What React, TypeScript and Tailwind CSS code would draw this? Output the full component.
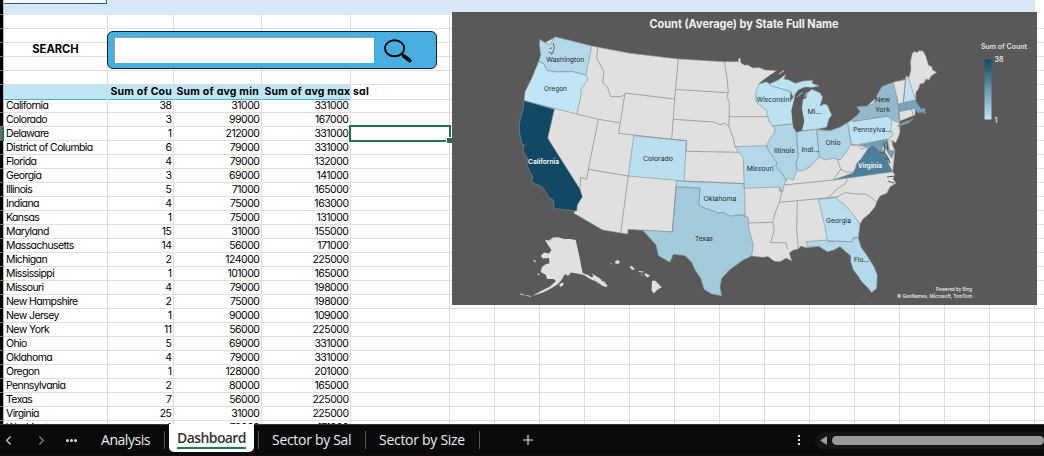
import React from "react";
import { ChevronLeft, ChevronRight, Plus } from "lucide-react";

type Row = [string, string, string, string];

const rows: Row[] = [
  ["California", "38", "31000", "331000"],
  ["Colorado", "3", "99000", "167000"],
  ["Delaware", "1", "212000", "331000"],
  ["District of Columbia", "6", "79000", "331000"],
  ["Florida", "4", "79000", "132000"],
  ["Georgia", "3", "69000", "141000"],
  ["Illinois", "5", "71000", "165000"],
  ["Indiana", "4", "75000", "163000"],
  ["Kansas", "1", "75000", "131000"],
  ["Maryland", "15", "31000", "155000"],
  ["Massachusetts", "14", "56000", "171000"],
  ["Michigan", "2", "124000", "225000"],
  ["Mississippi", "1", "101000", "165000"],
  ["Missouri", "4", "79000", "198000"],
  ["New Hampshire", "2", "75000", "198000"],
  ["New Jersey", "1", "90000", "109000"],
  ["New York", "11", "56000", "225000"],
  ["Ohio", "5", "69000", "331000"],
  ["Oklahoma", "4", "79000", "331000"],
  ["Oregon", "1", "128000", "201000"],
  ["Pennsylvania", "2", "80000", "165000"],
  ["Texas", "7", "56000", "225000"],
  ["Virginia", "25", "31000", "225000"],
  ["Washington", "4", "79000", "171000"],
];

const tail = Array.from({ length: 14 }, (_, i) => i);
const line = "shrink-0 border-r border-b border-[#dedede]";

function Gutter({ selected = false }: { selected?: boolean }) {
  return selected ? (
    <div className="h-full w-1 shrink-0 border-r-2 border-b border-b-[#555] border-r-[#217346] bg-[#6b6b6b]" />
  ) : (
    <div className="h-full w-1 shrink-0 border-r border-b border-r-[#b9b9b9] border-b-[#777] bg-black" />
  );
}

function TailCells() {
  return (
    <>
      <div className={`${line} h-full w-[99px]`} />
      {tail.map((i) => (
        <div key={i} className={`${line} h-full w-[45px]`} />
      ))}
    </>
  );
}

function SheetRow({ cells, selected }: { cells?: Row; selected?: boolean }) {
  const c = cells ?? ["", "", "", ""];
  const num = "h-full pr-[1.5px] text-right";
  return (
    <div className="flex h-[14px] shrink-0 text-[10.5px] leading-[13px] tracking-[-0.5px] text-black">
      <Gutter selected={selected} />
      <div className={`${line} h-full w-[104px] pl-[2px] tracking-[-0.6px] whitespace-nowrap`}>{c[0]}</div>
      <div className={`${line} ${num} w-[66px]`}>{c[1]}</div>
      <div className={`${line} ${num} w-[88px]`}>{c[2]}</div>
      <div className={`${line} ${num} w-[89px]`}>{c[3]}</div>
      <TailCells />
    </div>
  );
}

function HeaderRow() {
  const cell = "h-full shrink-0 border-b border-[#47aee0] bg-[#bfe6f5] pl-[2.5px] whitespace-nowrap";
  return (
    <div className="flex h-[15px] shrink-0 text-[10.5px] leading-[14px] font-bold tracking-[0.22px] text-black">
      <Gutter />
      <div className={`${cell} w-[104px]`} />
      <div className={`${cell} w-[66px] overflow-hidden`}>Sum of Cou</div>
      <div className={`${cell} w-[88px]`}>Sum of avg min</div>
      <div className={`${cell} w-[89px]`}>
        <span className="relative">Sum of avg max sal</span>
      </div>
      <TailCells />
    </div>
  );
}

function SearchBox() {
  return (
    <div className="absolute top-[31px] left-[107px] flex h-[38px] w-[330px] items-center rounded-[6px] border border-[#0b2233] bg-[#47aee0] pl-[6px]">
      <div className="h-[26px] w-[260px] border-t border-l border-[#a09a98] bg-white" />
      <svg className="ml-[8px]" width="32" height="28" viewBox="382 36 32 28">
        <ellipse cx="394.6" cy="48.3" rx="9.6" ry="8" fill="none" stroke="#000" strokeWidth="1.9" />
        <path d="M401.5 54.2l3 2" stroke="#000" strokeWidth="2" />
        <path d="M404 56.3l5.8 4.2" stroke="#000" strokeWidth="3.8" strokeLinecap="round" />
      </svg>
    </div>
  );
}

const land = "#e0e0e0";
const wa = "M540 39.3L545 42.7L550.7 44.7L552.3 40.7L555 36.7L591.7 46L586 75L572.7 71.7L555 72L546.7 70.3L544 64L538.7 61.3L540.7 55L539.3 45Z";
const mainland =
  "M544 64L540 45L555 37.5L591.7 46L630 53.3L678.3 59L724.3 61.7L738.3 61.7L738.7 58L740.3 58.5L740.7 62.7L745 65.5L747.3 64.7L753 68L759.3 67.5L765 70L776.7 70.7L768.3 78.3L758.7 84L792.7 124L797 131.5L816.7 129.3L830 130.7L840 127.3L851.7 120L893.3 82.3L905.7 79.3L909 77.3L911 70L910.5 62L912.3 53.3L914 51.5L917 52.5L919 50.7L923 51L926 56.7L928.3 65L932 67L932.5 70L936.7 72.3L931 76L929 80L926 79L924 83L920 84L918.5 89L916 92L915.7 100L915 115L900 121L899.3 123.3L900 132L898.3 137L895.5 143L892 140L893 147L895 150L892.7 171.7L895 175L893 179L896 183L890 187L886.7 193.3L880 196L876.7 201.7L875 207L869 214L863 219L860 224L858.3 238L852 243L806 247.7L801 246L798 249L793.3 250L789.3 253L791.7 261L786 258L780 261.7L774 261L768 256.5L763.3 257.3L751.7 256L745 215L672.3 232L628 229.3L627.7 234L602.7 230L574 213.3L576.7 205L548 138L530 99Z";
const blueStates: [string, string, string][] = [
  ["washington", "#b3d8ea", wa],
  ["oregon", "#c0e6f6", "M538.7 61.3L544 64L546.7 70.3L555 72L572.7 71.7L586 75L588 79.3L580.7 90L581.5 94L576.7 114L524 100.7L525 91.7L531.7 78.3Z"],
  ["california", "#114863", "M524 100.7L554.3 109.3L547.7 138.3L580 189.3L582.3 196.7L577.3 205L576.7 211L554.3 208.7L553.3 200L548 197L546.7 193L541.7 186.7L531.7 182.3L532.7 176.7L529 170L526.7 163.3L528 159L523 151L524 145L521.7 143.3L519.5 132L519.5 122L523 110Z"],
  ["colorado", "#b9dfef", "M633.7 135.7L686.3 140.7L684.3 181L628.3 176Z"],
  ["texas", "#a4cbdc", "M676 186.7L700 188L699 205.5L705 208L711 210L718 213L724 212.5L730 216L740 214.7L748.3 217.3L748.7 228.3L753.3 245L751.7 256L743.3 260L730 269.5L721.7 278.3L720 286.7L721.7 295.7L711.7 294L704 289.3L700.7 278.3L695 270L691.7 262.3L685 255.7L673.3 254.3L670 262.3L658.3 255.7L656 245L642.5 230L672.3 232Z"],
  ["oklahoma", "#b3d8ea", "M676.3 181L744 183.6L745 199L745 215.5L740 214.7L730 216L724 212.5L718 213L711 210L705 208L699 205.5L700 188L676 186.7Z"],
  ["missouri", "#b3d8ea", "M735 146.7L766.7 145.7L768.3 150L771 154L776.7 162.7L776 166.7L783.3 175L786 181L784 185L782.7 190.7L779.5 191.5L779.3 187L744.3 188.3L743.3 157.7L739.3 153.3Z"],
  ["wisconsin", "#bce2f2", "M758.7 84L766.7 81.7L771.7 85L783.3 89.3L790.7 91.7L790 101.7L796 93.3L791.7 110L792.7 124L772.5 126L769.3 122L766 110L755.7 101.7L756 91.7Z"],
  ["michigan-upper", "#bce2f2", "M769 84L778.3 80L786 74L784 79L789 80L795 83.3L803.3 81L813 80.3L812 83L819.3 86L812 87.5L805 87L798.3 90L793 97L790.7 91.7L783.3 89.3L771.7 86Z"],
  ["michigan-lower", "#bce2f2", "M811.7 89.3L820 92.7L822.7 97.3L820 106L824 104L827.3 105L831.7 115L829 119L826.7 127.3L816.7 129.3L801.7 131L804 121.7L801.7 108.3L803 99L806 98L807 93.3Z"],
  ["illinois", "#afd4e6", "M772.5 126L792.7 124L796 131.7L798.3 156.7L796 164L797.3 170L793.3 180L788 178L786 181L783.3 175L776 166.7L776.7 162.7L768.3 150L766.7 145.7L770 138.3L774 133.3L775 128Z"],
  ["indiana", "#b3d8ea", "M796.5 131.7L816.7 129.3L819.3 157.3L814 162L810 166.7L804 170L797.3 171L796 164L798.3 156.7Z"],
  ["ohio", "#afd4e6", "M816.7 129.3L823 131L830 130.7L840 127.3L847.7 122.7L851 143.3L846.7 151.7L840 160L833.3 158.3L826 160L819.3 157.3Z"],
  ["pennsylvania", "#bce2f2", "M847.7 122.7L851.7 120L852.5 121.5L888.3 116L891.7 121.7L890.7 130L893.3 135L888.3 139L851.7 145.7Z"],
  ["new-york", "#92b9cc", "M852.5 121.5L860 111.7L856.7 106.7L866 106L873.3 104L876 97L881.7 86.7L893.3 82.3L896.7 96.7L899 111.7L899.3 122.7L892.7 120L888.3 116Z"],
  ["long-island", "#7ca9c0", "M897 126.5L902 123L913.3 118.8L908 123.3Z"],
  ["new-hampshire", "#bce2f2", "M905.7 76.7L907.7 76L913 92L915.7 100L903.3 102.7Z"],
  ["massachusetts", "#76a4bc", "M898.3 104L915 100.3L918.3 105L921 109L925 108L925 111.7L918.3 113L914.3 108.5L899 111.7Z"],
  ["virginia", "#4e7f98", "M833.3 180L846 175.5L853 173L855.5 168L857 163L861 159L865 153L868.5 147.5L873 145L879 150L886.7 157L889 165L892.7 171.7Z"],
  ["maryland", "#719fb5", "M859.3 145L887.3 139.3L889.3 150.7L895 150.5L891.7 158.3L888 153L884 145L882 149L886 157L879 151L873 145L866 147Z"],
  ["georgia", "#b9dfef", "M818.3 199.3L836.7 197.3L838 200L845 205L853 214L860 224L858.3 237.3L853.3 238L852.7 241.7L827.3 240.7L826 234L825 226.7Z"],
  ["florida", "#b3d8ea", "M806 241.7L826.7 240L828 241.5L852.7 241.7L853.3 238L858.3 238L861 247L866.7 255L874 266.7L877.3 275L876.7 288.3L871.7 292.7L867.3 287.3L861.7 281.7L858 276L853.3 270L850.7 262L850.7 256L840 246.7L834 250L827.3 251.7L818.3 246L807.3 247Z"],
];
const borders =
  "M576.7 114L598.3 119.3L619.3 122.7M598.3 119.3L588.3 169.3L586.7 179.3L580.7 177.3L580 189.3M588.3 169.3L628.3 176L620.7 232.7M597.7 47.3L596.7 58.3L604 71.7L602.7 82.7L607.3 86.7L610.7 96.7L620.7 96.7L624.7 95M625 93L674.7 99L671.7 139.3L618.7 133.3ZM678.3 59L674.7 99M676.3 89.5L728.3 92.7M673.3 119.3L713.3 122L720 124.7L725 123.3L729.3 127.3L733.3 138.3L735 146.7M671.7 139.3L686.7 140.7L686 151.3L738.3 152.3M684.3 181L744 183.6M724.3 61.7L727.3 80L728.3 92.7L726.7 96.7L729.3 101.7L729 127M729 116.7L767.3 116.7M676 187L672.3 232M779.3 187L782 191L779.3 202.3L775 213.3L772.7 221.7L774.3 230L770.7 242.7L786 242.7L787.3 249M748.7 223L772.7 222.3M779.3 202.3L836.7 197L845 192.7L856.7 194L866 194L876.7 201.7M784 185L833.3 180M797.3 200.7L796.7 230L798.3 249M847.7 179.3L845 184L837 189L828.3 198M837.3 159.5L840.7 169.3L833.3 180M840.7 169.3L846.7 172L853 172M851 144L858 145.5L862 149L868 147M897.7 104L896.7 96M903.3 102.7L905.7 79.3L898 81M899 111.7L900 121M911.5 109L913 115";

const labels: [string, number, number, number, boolean?][] = [
  ["Washington", 565.3, 62, 38],
  ["Oregon", 555.5, 91, 23],
  ["California", 543.6, 164, 31, true],
  ["Colorado", 658, 161, 30],
  ["Texas", 704, 241, 18],
  ["Oklahoma", 720, 200.5, 33],
  ["Missouri", 760.2, 171, 27],
  ["Wisconsin", 773, 102.3, 33],
  ["Illinois", 784.6, 153, 21],
  ["Indi...", 810.5, 152, 18],
  ["Mi...", 814.5, 114, 14],
  ["Ohio", 833, 145, 15],
  ["New", 882.5, 102, 15],
  ["York", 882.5, 112.3, 15],
  ["Pennsylva...", 872.3, 132, 38],
  ["Virginia", 870, 168, 24, true],
  ["Georgia", 838.5, 223, 25],
  ["Flo...", 861.5, 262, 15],
];

function MapChart() {
  return (
    <div className="absolute top-[12px] left-[452px] h-[293px] w-[585px] bg-[#595959] [font-feature-settings:normal]">
      <svg width="585" height="293" viewBox="452 12 585 293" fontFamily="Inter,'Noto Sans',sans-serif">
        <defs>
          <linearGradient id="scale" x1="0" y1="0" x2="0" y2="1">
            <stop offset="0" stopColor="#114863" />
            <stop offset="1" stopColor="#c0e6f6" />
          </linearGradient>
        </defs>
        <path d={mainland} fill={land} stroke="#999" strokeWidth="0.5" />
        {blueStates.map(([name, fill, d]) => (
          <path key={name} d={d} fill={fill} stroke="#7f8b91" strokeWidth="0.6" strokeLinejoin="round" />
        ))}
        <path d={borders} fill="none" stroke="#8c8c8c" strokeWidth="0.75" strokeLinejoin="round" />
        {/* Lake Michigan, Superior shoreline and coastal inlets */}
        <path d="M796 93L801 89L808 87.8L811 89L806.5 93.5L805.5 98L802.5 99L801.5 109L804 121L801.5 130L797 132.5L793.5 128L791.5 111Z" fill="#595959" />
        <path d="M758.7 83.5L770 75L777 70.5L784 69L779 76L770 83.5L766 81.5Z" fill="#595959" />
        <path d="M797 97L803 92M804.5 97L807 92" stroke="#bce2f2" strokeWidth="0.8" />
        <path d="M784 70.5L779 74" stroke="#bce2f2" strokeWidth="1" />
        <path d="M553.3 43L554.3 48L552.5 53.5L548.5 52M552 48L549.5 48.5M552.7 53L551 55" fill="none" stroke="#6a6f72" strokeWidth="1" />
        <path d="M883.5 142.5L885 148L884 152L888 158L890 163M886.5 141.5L888 150M885 154L880 152M889 160L885 158" fill="none" stroke="#4d5356" strokeWidth="1.1" />
        <path d="M888 140L890 141L894.5 150L890 150.5Z" fill={land} stroke="#999" strokeWidth="0.4" />
        <path d="M524 145L527 144.5M895 176L887 177M894 183L888 181" stroke="#595959" strokeWidth="1" />
        <path d="M923 113.5L926 112.5" stroke="#76a4bc" />
        {/* Alaska */}
        <path fill={land} d="M545 240L549 240.5L553 237.5L558.3 237.3L564 239L570 239L575.7 240L579.5 257L582.7 273.3L587 274.5L592 277.5L594 275L599 278L603 282L607.5 285L606.5 287L602 285.5L598 282L591 279.5L584 275L577 273.5L571 272.5L568 276L565 274L561.5 280L558 284L551 288.5L543 292.5L532 296L541 291L550 286.5L556 281L553.5 279L547 279L546 275L540.7 272L542 267L546 264L549.5 263.5L549 258L543 258.5L540.7 256L544 252.5L549 253.5L551.5 250L548 245Z" />
        <path d="M592 274L606 283M594 279L605 287M592 277L599 284M597 278L604 283M531 296.5L520 294" fill="none" stroke={land} strokeWidth="0.8" strokeDasharray="5 1.5" />
        <path fill={land} d="M559 285L562 282.5L564 284L561 287ZM532.5 259.5L536 261L535 262.5ZM537 273.5L540 274L538.5 275.5Z" />
        {/* Hawaii */}
        <path fill={land} d="M615 261.5L617.5 260L620 261.5L618.5 264L615.5 263.5ZM629.5 266.5L632 266L635 269.5L632 269.7ZM638.5 271L644 271.5L643 272.5L639 272ZM645 273L650 275.5L647.5 277.5L644.5 275ZM641 274L643 275L641.5 275.5ZM610.5 263.5L612 262.8L611 264.5ZM652 281L655 280.5L657.5 283L661.7 287.3L657 290L654 293.5L651.5 290.5Z" />
        <path d="M533 188.5L539 190M542 192L545 195M545 198L547 203" stroke="#40545e" strokeWidth="1" strokeDasharray="2 2" />
        <path d="M858 299L870 294" stroke="#737b7e" strokeWidth="0.7" strokeDasharray="1.5 1.5" />

        {labels.map(([t, x, y, w, light]) => (
          <text key={t} x={x} y={y} textAnchor="middle" textLength={w} lengthAdjust="spacingAndGlyphs" fontSize="6.8" fontWeight={light ? 600 : 400} fill={light ? "#fff" : "#23282b"}>
            {t}
          </text>
        ))}

        <text x="649.5" y="28" fontSize="11.5" fontWeight="700" fill="#f2f2f2" textLength="189" lengthAdjust="spacingAndGlyphs">Count (Average) by State Full Name</text>
        <text x="981" y="49" fontSize="7" fontWeight="600" fill="#e2e2e2" textLength="46" lengthAdjust="spacingAndGlyphs">Sum of Count</text>
        <rect x="984.5" y="59.5" width="7" height="60" fill="url(#scale)" />
        <text x="994.5" y="62.3" fontSize="7" fontWeight="600" fill="#e2e2e2">38</text>
        <text x="994.5" y="123" fontSize="7" fontWeight="600" fill="#e2e2e2">1</text>
        <text x="972" y="291" fontSize="5.2" fontWeight="500" fill="#f2f2f2" textAnchor="end" textLength="36" lengthAdjust="spacingAndGlyphs">Powered by Bing</text>
        <text x="972" y="298" fontSize="5.2" fontWeight="500" fill="#f2f2f2" textAnchor="end" textLength="75" lengthAdjust="spacingAndGlyphs">© GeoNames, Microsoft, TomTom</text>
      </svg>
    </div>
  );
}

function TabBar() {
  const sep = "h-[18px] w-px bg-[#555]";
  return (
    <div className="relative flex h-8 w-full shrink-0 border-t border-[#3a3a3a] border-b-[#180810] border-b bg-[#0a0a0a] font-['Open_Sans','Noto_Sans',sans-serif] text-[14px] leading-[30px] whitespace-nowrap text-[#ededed]">
      <div className="flex h-[30px] w-[88px] items-center">
        <ChevronLeft size={15} strokeWidth={1.8} className="ml-[1px] text-[#d0d0d0]" />
        <ChevronRight size={15} strokeWidth={1.8} className="ml-[18px] text-[#858585]" />
        <div className="ml-[17px] flex gap-px">
          <i className="size-[3px] rounded-full bg-[#d8d8d8]" />
          <i className="size-[3px] rounded-full bg-[#d8d8d8]" />
          <i className="size-[3px] rounded-full bg-[#d8d8d8]" />
        </div>
      </div>
      <div className="flex h-[30px] w-[81px] items-center pl-[13px]">
        <span className="w-[63px] tracking-[-0.45px]">Analysis</span>
        <div className={sep} />
      </div>
      <div className="-mt-px h-[28px] w-[85px] rounded-b-[5px] bg-white px-2">
        <div className="h-[25px] border-b-2 border-[#17804a] text-center font-semibold leading-[27px] tracking-[-0.6px] text-[#333]">Dashboard</div>
      </div>
      <div className="flex h-[30px] items-center pl-1">
        <div className={sep} />
        <span className="w-[106px] pl-[13px] tracking-[-0.3px]">Sector by Sal</span>
        <div className={sep} />
        <span className="w-[113px] pl-[13px] tracking-[-0.28px]">Sector by Size</span>
        <div className={sep} />
        <Plus size={16} strokeWidth={1.6} className="ml-[40px]" />
      </div>
      <div className="ml-auto flex h-[30px] items-center">
        <div className="mr-[15px] flex flex-col gap-[2px]">
          <i className="size-[2px] bg-[#dedede]" />
          <i className="size-[2px] bg-[#dedede]" />
          <i className="size-[2px] bg-[#dedede]" />
        </div>
        <div className="flex h-[17px] w-[229px] items-center rounded-l-full bg-[#151515] pl-[5px]">
          <svg width="7" height="9" viewBox="0 0 7 9">
            <path d="M6.5 0.8v7.4L0.8 4.5z" fill="#a0a0a0" stroke="#a0a0a0" strokeLinejoin="round" />
          </svg>
          <div className="ml-[5px] h-[9px] flex-1 rounded-full bg-[#999]" />
        </div>
      </div>
    </div>
  );
}

export default function App() {
  return (
    <div className="relative flex h-[456px] w-[1044px] flex-col overflow-hidden bg-white font-['Inter','Liberation_Sans',sans-serif] [font-feature-settings:'cv11']">
      <div className="relative flex min-h-0 flex-1 flex-col overflow-hidden">
        <div className="flex h-[15px] shrink-0">
          <Gutter />
          <div className="h-1 w-[103px] border-r border-b border-[#1d6088] bg-white" />
          <div className="absolute top-1 left-1 h-[11px] w-[103px] bg-[#d9e8f7]" />
          <div className="w-[928px] bg-[#d9e8f7]" />
        </div>
        <SheetRow />
        <SheetRow />
        <div className="flex h-[14px] shrink-0">
          <Gutter />
          <div className={`${line} h-full w-[104px] text-center text-[11.2px] leading-[13px] font-bold`}>SEARCH</div>
          <div className={`${line} h-full w-[66px]`} />
          <div className={`${line} h-full w-[88px]`} />
          <div className={`${line} h-full w-[89px]`} />
          <TailCells />
        </div>
        <SheetRow />
        <SheetRow />
        <HeaderRow />
        <div className="-mt-px flex flex-col">
          {rows.map((r) => (
            <SheetRow key={r[0]} cells={r} selected={r[0] === "Delaware"} />
          ))}
        </div>
        <SearchBox />
        <div className="absolute top-[125px] left-[349px] h-[17px] w-[102px] border-2 border-[#217346]" />
        <MapChart />
        <div className="absolute top-[137px] left-[446px] size-[6px] border-t border-l border-white bg-[#217346]" />
      </div>
      <TabBar />
    </div>
  );
}
